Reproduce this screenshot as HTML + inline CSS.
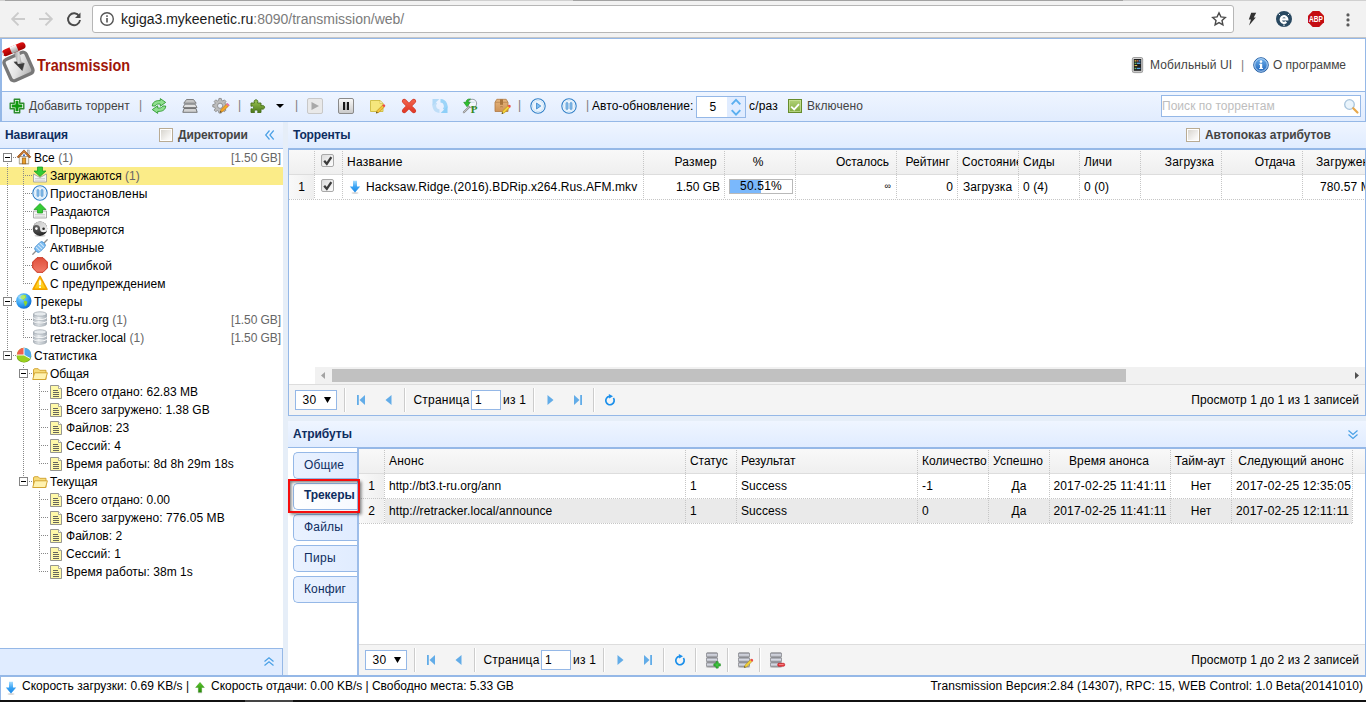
<!DOCTYPE html>
<html lang="ru">
<head>
<meta charset="utf-8">
<title>Transmission WEB Control</title>
<style>
*{box-sizing:border-box}
html,body{margin:0;padding:0}
body{width:1366px;height:702px;overflow:hidden;position:relative;background:#fff;font:12px "Liberation Sans",sans-serif;color:#000}
.abs,.t,.ic,.ln{position:absolute}
.t{white-space:nowrap;line-height:14px;height:14px}
.b{font-weight:bold}
.g{color:#444}
.gr{color:#666}
.nv{color:#0e2d5f}
svg{display:block;overflow:visible}
.ic{width:16px;height:16px}
/* browser chrome */
#chrome{left:0;top:0;width:1366px;height:38px;background:#f2f2f2;border-top:1px solid #d0d0d0;border-bottom:1px solid #c6c6c6}
#url{left:92px;top:5px;width:1142px;height:28px;background:#fff;border:1px solid #b6b6b6;border-radius:3px}
#urltext{left:121px;top:10px;font-size:14px;line-height:18px;height:18px;color:#1a1a1a}
#urltext span{color:#7b7b7b}
/* header */
#head{left:0;top:38px;width:1366px;height:54px;background:#fff;border:1px solid #95b8e7;border-left-width:2px;border-bottom:0}
#logo{left:37px;top:55px;font-weight:bold;font-size:17px;line-height:22px;height:22px;color:#a01508;transform:scaleX(.85);transform-origin:0 0}
#tb{left:0;top:91px;width:1366px;height:31px;background:linear-gradient(#eff5ff,#e1ecfe);border:1px solid #95b8e7;border-left-width:2px}
.sep{position:absolute;width:1px;height:11px;background:#8a8a8a;top:101px}
#spin{left:696px;top:96px;width:50px;height:22px;border:1px solid #95b8e7;background:#fff}
#spinr{left:727px;top:97px;width:18px;height:20px;background:#e0ecff}
#search{left:1161px;top:95px;width:200px;height:22px;border:1px solid #95b8e7;background:#fff}
/* panels */
.ph{position:absolute;height:27px;background:linear-gradient(#eff5ff,#e0ecff);border-bottom:1px solid #95b8e7}
.split{position:absolute;background:#e6eef8}
.bl{position:absolute;background:#95b8e7}
/* tree */
.row{position:absolute;left:0;width:283px;height:18px}
.sel{background:#fbec88}
.vl{position:absolute;width:1px;background-image:linear-gradient(#888 50%,transparent 50%);background-size:1px 2px}
.hl{position:absolute;height:1px;background-image:linear-gradient(90deg,#888 50%,transparent 50%);background-size:2px 1px}
.box{position:absolute;width:9px;height:9px;border:1px solid #848484;background:#fff}
.box:after{content:"";position:absolute;left:1px;top:3px;width:5px;height:1px;background:#000}
/* grids */
.gh{position:absolute;height:26px;background:linear-gradient(#f9f9f9,#efefef);border-bottom:1px solid #ddd}
.vd{position:absolute;width:1px;background-image:linear-gradient(#c6c6c6 50%,transparent 50%);background-size:1px 2px}
.hd{position:absolute;height:1px;background-image:linear-gradient(90deg,#c6c6c6 50%,transparent 50%);background-size:2px 1px}
.pg{position:absolute;height:31px;background:#f4f4f4;border-top:1px solid #ddd}
.psep{position:absolute;width:2px;height:24px;border-left:1px solid #ccc;border-right:1px solid #fff}
.psel{position:absolute;width:42px;height:20px;border:1px solid #95b8e7;background:#fff}
.pin{position:absolute;width:30px;height:20px;border:1px solid #95b8e7;background:#fff}
.cb{position:absolute;width:13px;height:13px;border:1px solid #a9a9a9;border-radius:2px;background:linear-gradient(135deg,#dcdcdc,#fdfdfd)}
.cbo{position:absolute;width:14px;height:14px;border:1px solid #b9ab93;box-shadow:inset 0 0 0 1px #fff;background:linear-gradient(135deg,#d4d1ca,#f6f5f3 70%,#fff)}
.tab{position:absolute;left:293px;width:64px;height:27px;border:1px solid #95b8e7;border-right:0;border-radius:5px 0 0 5px;background:linear-gradient(90deg,#eaf2ff,#e0ecff)}
#bottomdark{left:0;top:700px;width:1366px;height:2px;background:#111}
</style>
</head>
<body>
<div id="chrome" class="abs"></div>
<div id="url" class="abs"></div>
<div class="abs" style="left:5px;top:0;width:445px;height:1px;background:#a2a2a2"></div>
<div class="abs" style="left:573px;top:0;width:550px;height:1px;background:#a2a2a2"></div>
<div class="ic" style="left:10px;top:11px;width:16px;height:16px"><svg viewBox="0 0 16 16" width="100%" height="100%"><path d="M15 8H3M8.500 1.700 2.200 8l6.300 6.300" fill="none" stroke="#cbcbcb" stroke-width="1.900"/></svg></div>
<div class="ic" style="left:38px;top:11px;width:16px;height:16px"><svg viewBox="0 0 16 16" width="100%" height="100%"><path d="M1 8h12M7.500 1.700 13.800 8l-6.300 6.300" fill="none" stroke="#cbcbcb" stroke-width="1.900"/></svg></div>
<div class="ic" style="left:65px;top:10px;width:18px;height:18px"><svg viewBox="0 0 18 18" width="100%" height="100%"><path d="M14.2 6.200A6 6 0 1 0 15 10" fill="none" stroke="#4a4a4a" stroke-width="1.9"/><path d="M15.500 2.500v5.500h-5.500z" fill="#4a4a4a"/></svg></div>
<div class="ic" style="left:99px;top:11px;width:16px;height:16px"><svg viewBox="0 0 16 16" width="100%" height="100%"><circle cx="8" cy="8" r="6.300" fill="none" stroke="#555" stroke-width="1.400"/><rect x="7.200" y="7" width="1.600" height="4.500" fill="#555"/><rect x="7.200" y="4.300" width="1.600" height="1.600" fill="#555"/></svg></div>
<div id="urltext" class="t">kgiga3.mykeenetic.ru<span>:8090/transmission/web/</span></div>
<div class="ic" style="left:1211px;top:11px;width:16px;height:16px"><svg viewBox="0 0 16 16" width="100%" height="100%"><path d="M8 1.800l1.900 4.100 4.400.500-3.300 3 .900 4.400L8 11.600l-3.900 2.200.900-4.400-3.300-3 4.400-.500z" fill="none" stroke="#4a4a4a" stroke-width="1.400" stroke-linejoin="miter"/></svg></div>
<div class="ic" style="left:1248px;top:12px;width:9px;height:14px"><svg viewBox="0 0 9 14" width="100%" height="100%"><path d="M3.200 .8H8.200L5.700 5.400H7.800L1 13.400 3 7.600H.8z" fill="#333"/></svg></div>
<div class="ic" style="left:1276px;top:11px;width:16px;height:16px"><svg viewBox="0 0 16 16" width="100%" height="100%"><circle cx="8" cy="8" r="8" fill="#284860"/><path d="M4.700 8.400H11.300A3.300 3.300 0 1 0 10.300 10.900" fill="none" stroke="#fff" stroke-width="2.200"/><path d="M2.600 2.600l1.500 1.500M13.400 2.600l-1.500 1.500M8 13.300v1.900" stroke="#fff" stroke-width="1"/></svg></div>
<div class="ic" style="left:1308px;top:11px;width:16px;height:16px"><svg viewBox="0 0 18 18" width="100%" height="100%"><path d="M5.300 0h7.400L18 5.300v7.400L12.700 18H5.300L0 12.700V5.300z" fill="#c40d12"/><text x="1.200" y="12.400" font-family="Liberation Sans,sans-serif" font-weight="bold" font-size="9.400" fill="#fff" textLength="15.600" lengthAdjust="spacingAndGlyphs">ABP</text></svg></div>
<div class="ic" style="left:1346px;top:13px;width:4px;height:14px"><svg viewBox="0 0 4 14" width="100%" height="100%"><circle cx="2" cy="1.900" r="1.600" fill="#5a5a5a"/><circle cx="2" cy="6.900" r="1.600" fill="#5a5a5a"/><circle cx="2" cy="11.900" r="1.600" fill="#5a5a5a"/></svg></div>
<div id="head" class="abs"></div>
<div class="ic" style="left:0px;top:40px;width:40px;height:46px"><svg viewBox="0 0 40 46" width="100%" height="100%"><defs><linearGradient id="lgF" x1="0" y1="0" x2="1" y2="1"><stop offset="0" stop-color="#ffffff"/><stop offset=".5" stop-color="#e4e4e4"/><stop offset="1" stop-color="#a8a8a8"/></linearGradient>
<linearGradient id="lgS" x1="0" y1="0" x2="1" y2="0"><stop offset="0" stop-color="#8a8a8a"/><stop offset=".5" stop-color="#d8d8d8"/><stop offset="1" stop-color="#6a6a6a"/></linearGradient>
<linearGradient id="lgR" x1="0" y1="0" x2="0" y2="1"><stop offset="0" stop-color="#e01010"/><stop offset="1" stop-color="#a00000"/></linearGradient>
<linearGradient id="lgM" x1="0" y1="0" x2="0" y2="1"><stop offset="0" stop-color="#ffffff"/><stop offset="1" stop-color="#9a9a9a"/></linearGradient></defs>
<g transform="rotate(-24 18.500 26.500)"><rect x="6.500" y="15" width="24" height="23" rx="3.500" fill="url(#lgF)" stroke="#787878" stroke-width="3.400"/></g>
<path d="M13 9.500 18.500 7.500l3 14.500 3.200 1.200-2 7.800-9-8.400 3.300-.3z" fill="url(#lgS)"/>
<path d="M13.600 21.800l3.400-.3.800 2.500 6.400-.8-2 7.600z" fill="#3c3c3c"/>
<g transform="rotate(-23 13.700 9.300)"><rect x="1.700" y="5.800" width="24.500" height="7" rx="3.500" fill="url(#lgR)"/><rect x="10.500" y="5.800" width="7" height="7" fill="url(#lgM)"/><rect x="1" y="7.800" width="1.800" height="3" rx=".7" fill="#ddd"/></g></svg></div>
<div id="logo" class="t">Transmission</div>
<div class="ic" style="left:1131px;top:57px;width:13px;height:16px"><svg viewBox="0 0 13 16" width="100%" height="100%"><ellipse cx="6.500" cy="15.600" rx="6" ry=".6" fill="#000" opacity=".2"/><rect x="1.300" y=".5" width="10.400" height="14.800" rx="1.500" fill="#d4d4d4" stroke="#8c8c8c" stroke-width=".8"/><rect x="2.800" y="2" width="7.400" height="11.800" fill="#1e1e1e"/><rect x="3.600" y="3.200" width="1.800" height="1.300" fill="#e8c44a"/><rect x="5.900" y="3.200" width="1.500" height="1.300" fill="#e66a4a"/><rect x="7.800" y="3.200" width="1.600" height="1.300" fill="#5aa6e6"/><rect x="3.600" y="5.600" width="1.800" height="1.300" fill="#6ac46a"/><rect x="5.900" y="5.600" width="3.500" height="1.300" fill="#5aa6e6"/><rect x="3.600" y="8" width="2.600" height="1.100" fill="#e8c44a"/><rect x="3.600" y="10.800" width="1.800" height="1.300" fill="#6ac46a"/><rect x="5.900" y="10.800" width="3.500" height="1.300" fill="#5aa6e6"/></svg></div>
<div class="t g" style="left:1150px;top:58px;letter-spacing:0.101px;">Мобильный UI</div>
<div class="t " style="left:1241px;top:58px;color:#7c7c7c;">|</div>
<div class="ic" style="left:1253px;top:57px;width:16px;height:16px"><svg viewBox="0 0 16 16" width="100%" height="100%"><defs><linearGradient id="ig" x1="0" y1="0" x2="0" y2="1"><stop offset="0" stop-color="#6fb2ee"/><stop offset="1" stop-color="#1d62b8"/></linearGradient></defs><circle cx="8" cy="8" r="7.300" fill="url(#ig)" stroke="#2a64a8" stroke-width="1"/><circle cx="8" cy="8" r="6.300" fill="none" stroke="#cfe4fa" stroke-width=".8"/><rect x="7" y="6.800" width="2.200" height="5" fill="#fff"/><rect x="6.200" y="6.800" width="2" height="1" fill="#fff"/><rect x="6.200" y="11" width="3.800" height="1" fill="#fff"/><circle cx="8" cy="4.600" r="1.300" fill="#fff"/></svg></div>
<div class="t g" style="left:1273px;top:58px;letter-spacing:-0.037px;">О программе</div>
<div id="tb" class="abs"></div>
<div class="ic" style="left:9px;top:98px;width:16px;height:16px"><svg viewBox="0 0 16 16" width="100%" height="100%"><path d="M5.300 1.200h5.400v4.100h4.100v5.400h-4.100v4.100H5.300v-4.100H1.200V5.300h4.100z" fill="#fff" stroke="#2e8c2e" stroke-width="1.400" stroke-linejoin="round"/><path d="M6.500 2.700h3v3.800h3.800v3H9.500v3.800h-3V9.500H2.700v-3h3.800z" fill="#0f9a0f"/></svg></div>
<div class="t g" style="left:29px;top:99px;letter-spacing:0.011px;">Добавить торрент</div>
<div class="t " style="left:139px;top:98px;color:#7c7c7c;">|</div>
<div class="t " style="left:238px;top:98px;color:#7c7c7c;">|</div>
<div class="t " style="left:295px;top:98px;color:#7c7c7c;">|</div>
<div class="t " style="left:518px;top:98px;color:#7c7c7c;">|</div>
<div class="t " style="left:586px;top:98px;color:#7c7c7c;">|</div>
<div class="ic" style="left:151px;top:98px;width:16px;height:16px"><svg viewBox="0 0 16 16" width="100%" height="100%"><path d="M1.300 8C1.300 4.600 4.300 2.600 7.800 2.600H9.300V.6L14.700 4.400 9.300 8.200V6H7.800C6 6 4.800 6.600 4.300 8z" fill="#8fe08f" stroke="#2f9a2f" stroke-width=".9" stroke-linejoin="round"/><path d="M1.300 8C1.300 4.600 4.300 2.600 7.800 2.600H9.300V.6L14.700 4.400 9.300 8.200V6H7.800C6 6 4.800 6.600 4.300 8z" fill="#8fe08f" stroke="#2f9a2f" stroke-width=".9" stroke-linejoin="round" transform="rotate(180 8 8)"/></svg></div>
<div class="ic" style="left:182px;top:98px;width:16px;height:16px"><svg viewBox="0 0 16 16" width="100%" height="100%"><path d="M4.500 1.500h7l2.700 3.700H1.800z" fill="#c4c4c4" stroke="#757575" stroke-width=".9" stroke-linejoin="round"/><path d="M2.800 6.200h10.400l1.800 3.300H1z" fill="#e0e0e0" stroke="#757575" stroke-width=".9" stroke-linejoin="round"/><path d="M2 10.500h12l1.200 3.800H.8z" fill="#d2d2d2" stroke="#6a6a6a" stroke-width=".9" stroke-linejoin="round"/></svg></div>
<div class="ic" style="left:213px;top:98px;width:16px;height:16px"><svg viewBox="0 0 16 16" width="100%" height="100%"><path d="M6.800 1h2.400l.4 2 1.300.6 1.700-1.100 1.600 1.600-1.100 1.700.6 1.300 2 .4v2.400l-2 .4-.6 1.300 1.100 1.700-1.600 1.600-1.700-1.100-1.300.6-.4 2H6.800l-.4-2-1.300-.6-1.700 1.100-1.600-1.600 1.100-1.700-.6-1.300-2-.4V7.500l2-.4.6-1.300-1.100-1.700 1.600-1.600 1.700 1.100 1.300-.6z" fill="#bcbcbc" stroke="#808080" stroke-width=".8" transform="translate(-.5,-.5) scale(.95)"/><circle cx="7.100" cy="7.800" r="2.600" fill="#e8eef8" stroke="#808080" stroke-width=".8"/><path d="M7 14.500l1-3 6-6 2 2-6 6z" fill="#f4a626" stroke="#a66a10" stroke-width=".5"/><path d="M13.200 6.300l1.300-1.300 2 2-1.300 1.300z" fill="#e66bb0"/><path d="M7 14.500l.5-1.500 1 1z" fill="#333"/></svg></div>
<div class="ic" style="left:250px;top:98px;width:16px;height:16px"><svg viewBox="0 0 16 16" width="100%" height="100%"><defs><linearGradient id="pz" x1="0" y1="0" x2="0" y2="1"><stop offset="0" stop-color="#9cc552"/><stop offset="1" stop-color="#4c7a1a"/></linearGradient></defs><path d="M1 5h3.500c-.9-1.800-.1-3.200 1.500-3.200S8.400 3.200 7.500 5H11v2.800c1.800-.9 3.600-.1 3.600 1.500S12.800 11.700 11 10.800v3.700H7.600c.6-1.600 0-2.500-1.500-2.500s-2.100.9-1.500 2.500H1v-3.800c1.500.7 2.600.1 2.600-1.200S2.500 7.600 1 8.300z" fill="url(#pz)" stroke="#466e18" stroke-width=".9" stroke-linejoin="round"/></svg></div>
<div class="ic" style="left:276px;top:104px;width:8px;height:4px"><svg viewBox="0 0 8 4" width="100%" height="100%"><path d="M0 0h8L4 4z" fill="#000"/></svg></div>
<div class="ic" style="left:307px;top:98px;width:16px;height:16px"><svg viewBox="0 0 16 16" width="100%" height="100%"><rect x=".5" y=".5" width="15" height="15" rx="1.500" fill="#e9e9e9" stroke="#c8c8c8"/><path d="M4.500 4l7.500 4-7.500 4z" fill="#a9a9a9"/></svg></div>
<div class="ic" style="left:338px;top:98px;width:16px;height:16px"><svg viewBox="0 0 16 16" width="100%" height="100%"><defs><linearGradient id="pb" x1="0" y1="0" x2="0" y2="1"><stop offset="0" stop-color="#fafafa"/><stop offset="1" stop-color="#c9c9c9"/></linearGradient></defs><rect x=".5" y=".5" width="15" height="15" rx="1.500" fill="url(#pb)" stroke="#8a8a8a"/><rect x="5" y="4" width="2.200" height="8" fill="#1a1a1a"/><rect x="8.800" y="4" width="2.200" height="8" fill="#1a1a1a"/></svg></div>
<div class="ic" style="left:369px;top:98px;width:16px;height:16px"><svg viewBox="0 0 16 16" width="100%" height="100%"><path d="M1.500 2.500h9.500l3 3v8h-12.500z" fill="#f5e67c" stroke="#cdbb3e" stroke-width=".9"/><path d="M11 2.500v3h3z" fill="#fffbd8" stroke="#cdbb3e" stroke-width=".6"/><path d="M7.300 15.200l.8-2.600 5.700-5.700 1.800 1.800-5.700 5.700z" fill="#f4c43a" stroke="#a87a10" stroke-width=".5"/><path d="M13.200 7.500l1-1a.9.900 0 0 1 1.300 0l.5.500a.9.900 0 0 1 0 1.300l-1 1z" fill="#ee4a4a"/><path d="M7.300 15.200l.4-1.400 1 1z" fill="#111"/></svg></div>
<div class="ic" style="left:401px;top:98px;width:16px;height:16px"><svg viewBox="0 0 16 16" width="100%" height="100%"><defs><linearGradient id="rx" x1="0" y1="0" x2="0" y2="1"><stop offset="0" stop-color="#f0604a"/><stop offset="1" stop-color="#e23c2a"/></linearGradient></defs><path d="M3.200 3.200 12.800 12.800M12.800 3.200 3.200 12.800" fill="none" stroke="#cf3a28" stroke-width="4.600" stroke-linecap="round"/><path d="M3.200 3.200 12.800 12.800M12.800 3.200 3.200 12.800" fill="none" stroke="url(#rx)" stroke-width="3.400" stroke-linecap="round"/></svg></div>
<div class="ic" style="left:432px;top:98px;width:16px;height:16px"><svg viewBox="0 0 16 16" width="100%" height="100%"><g opacity=".85"><path d="M7.500 13.200A5.300 5.300 0 0 1 3.800 4.200" fill="none" stroke="#b9dcf7" stroke-width="3.600"/><path d="M.5 1h6.800L.5 7.800z" fill="#a9d6f7"/><path d="M8.500 2.800A5.300 5.300 0 0 1 12.200 11.800" fill="none" stroke="#8fd0f8" stroke-width="3.600"/><path d="M15.500 15h-6.800l6.800-6.800z" fill="#7fcaf8"/></g></svg></div>
<div class="ic" style="left:462px;top:98px;width:16px;height:16px"><svg viewBox="0 0 16 16" width="100%" height="100%"><circle cx="10.300" cy="5.600" r="4.300" fill="#f3f7fb" stroke="#9aa3ab" stroke-width="1.100"/><path d="M7.600 4.200h5" stroke="#c9d6e4" stroke-width="1"/><path d="M7.200 9 1.800 14.300" stroke="#8a8a8a" stroke-width="2" stroke-linecap="round"/><path d="M7.200 9 1.800 14.300" stroke="#e4e4e4" stroke-width=".7" stroke-linecap="round"/><path d="M8.500 1C5.500 .6 4 2.300 4 4.300H1.700L5 8.800 8.300 4.300H6C6 3 6.800 1.700 8.500 1z" fill="#2fc02f" stroke="#1a8a1a" stroke-width=".6" stroke-linejoin="round"/><text x="8.700" y="15.200" font-family="Liberation Serif,serif" font-weight="bold" font-size="11" fill="#2f8a1a">P</text></svg></div>
<div class="ic" style="left:494px;top:98px;width:16px;height:16px"><svg viewBox="0 0 16 16" width="100%" height="100%"><defs><linearGradient id="bx" x1="0" y1="0" x2="0" y2="1"><stop offset="0" stop-color="#e6b67e"/><stop offset="1" stop-color="#cf9458"/></linearGradient></defs><path d="M1 4.300 2.800 1.300h9.400l1.800 3v9.200H1z" fill="url(#bx)" stroke="#b07a42" stroke-width=".8"/><path d="M1 4.300h13" stroke="#b98650" stroke-width=".8"/><path d="M6 1.300h3v5.500H6z" fill="#a8733c"/><path d="M6.300 8h2.400v1.800l-1.200-.8-1.200.8z" fill="#b98650"/><path d="M7.800 15.700l.8-2.600 5.700-5.700 1.800 1.800-5.700 5.700z" fill="#f4d23a" stroke="#a88410" stroke-width=".5"/><path d="M13.700 8l1-1a.9.900 0 0 1 1.300 0l.5.500a.9.900 0 0 1 0 1.300l-1 1z" fill="#ee4a4a"/><path d="M7.800 15.700l.4-1.400 1 1z" fill="#111"/></svg></div>
<div class="ic" style="left:530px;top:98px;width:16px;height:16px"><svg viewBox="0 0 16 16" width="100%" height="100%"><circle cx="8" cy="8" r="7.200" fill="#fff" stroke="#2f7fc8" stroke-width="1.100"/><circle cx="8" cy="8" r="5.600" fill="#eaf4fd" stroke="#bcdaf4" stroke-width=".8"/><path d="M6.500 5 10.800 8l-4.300 3z" fill="#7cbcf0" stroke="#3a86cc" stroke-width=".8" stroke-linejoin="round"/></svg></div>
<div class="ic" style="left:561px;top:98px;width:16px;height:16px"><svg viewBox="0 0 16 16" width="100%" height="100%"><circle cx="8" cy="8" r="7.200" fill="#fff" stroke="#2f7fc8" stroke-width="1.100"/><circle cx="8" cy="8" r="5.500" fill="#eef6fd" stroke="#c4dff6" stroke-width=".8"/><rect x="5.100" y="4.600" width="1.800" height="6.800" rx=".9" fill="#b4dcfa" stroke="#2f7fc8" stroke-width=".8"/><rect x="9.100" y="4.600" width="1.800" height="6.800" rx=".9" fill="#b4dcfa" stroke="#2f7fc8" stroke-width=".8"/></svg></div>
<div class="t " style="left:592px;top:99px;letter-spacing:0.076px;">Авто-обновление:</div>
<div id="spin" class="abs"></div><div id="spinr" class="abs"></div>
<div class="t " style="left:709.5px;top:100px;">5</div>
<div class="ic" style="left:731px;top:97px;width:10px;height:20px"><svg viewBox="0 0 10 20" width="100%" height="100%"><path d="M.7 7.300 5 2.800l4.300 4.500" fill="none" stroke="#5aaff0" stroke-width="1.900"/><path d="M.7 13.200 5 17.700l4.300-4.500" fill="none" stroke="#5aaff0" stroke-width="1.900"/></svg></div>
<div class="t " style="left:749px;top:99px;letter-spacing:0.163px;">с/раз</div>
<div class="ic" style="left:788px;top:99px;width:14px;height:14px"><svg viewBox="0 0 14 14" width="100%" height="100%"><defs><linearGradient id="cg" x1="0" y1="0" x2="0" y2="1"><stop offset="0" stop-color="#b4d47a"/><stop offset="1" stop-color="#7ea83c"/></linearGradient></defs><rect x=".5" y=".5" width="13" height="13" fill="url(#cg)" stroke="#668c2c"/><rect x="1.500" y="1.500" width="11" height="11" fill="none" stroke="#cfe6a0" stroke-width=".8" opacity=".8"/><path d="M3.200 7.600l3 2.800L11 5.200" fill="none" stroke="#fff" stroke-width="1.800"/></svg></div>
<div class="t g" style="left:807px;top:99px;letter-spacing:0.065px;">Включено</div>
<div id="search" class="abs"></div>
<div class="t " style="left:1162px;top:99px;color:#bdbdbd;letter-spacing:0.037px;">Поиск по торрентам</div>
<div class="ic" style="left:1343px;top:98px;width:16px;height:16px"><svg viewBox="0 0 16 16" width="100%" height="100%"><circle cx="6.500" cy="6.500" r="4.800" fill="#eaf4fb" stroke="#a8c4dc" stroke-width="1.300"/><path d="M10.200 10.200 14.500 14.500" stroke="#e8a84a" stroke-width="2.200" stroke-linecap="round"/></svg></div>
<div class="ph" style="left:0;top:122px;width:283px"></div>
<div class="t b nv" style="left:5px;top:128px;letter-spacing:-0.058px;">Навигация</div>
<div class="cbo" style="left:159px;top:128px"></div>
<div class="t b g" style="left:178px;top:128px;letter-spacing:-0.123px;">Директории</div>
<div class="ic" style="left:265px;top:130px;width:9px;height:10px"><svg viewBox="0 0 9 10" width="100%" height="100%"><path d="M4.500 .5 .7 5l3.800 4.500M8.700 .5 4.900 5l3.800 4.500" fill="none" stroke="#4aa0e6" stroke-width="1.200"/></svg></div>
<div class="split" style="left:283px;top:122px;width:5px;height:554px"></div>
<div class="row sel" style="top:167px"></div>
<div class="vl" style="left:7px;top:163px;height:188px"></div>
<div class="vl" style="left:23px;top:167px;height:117px"></div>
<div class="vl" style="left:23px;top:311px;height:27px"></div>
<div class="vl" style="left:23px;top:365px;height:112px"></div>
<div class="vl" style="left:39px;top:383px;height:81px"></div>
<div class="vl" style="left:39px;top:491px;height:81px"></div>
<div class="hl" style="left:11px;top:157px;width:5px"></div>
<div class="box" style="left:3px;top:153px"></div>
<div class="ic" style="left:16px;top:149px;width:16px;height:16px"><svg viewBox="0 0 16 16" width="100%" height="100%"><defs><linearGradient id="hr" x1="0" y1="0" x2="0" y2="1"><stop offset="0" stop-color="#d8893e"/><stop offset="1" stop-color="#b8641e"/></linearGradient></defs><rect x="11.300" y="1" width="1.900" height="4.500" fill="#d0d0d0" stroke="#8a8a8a" stroke-width=".5"/><path d="M3.300 7.500h9.400v7.300H3.300z" fill="#f6f2e8" stroke="#9a917e" stroke-width=".8"/><path d="M3 14.300h10v.9H3z" fill="#aaa08c"/><path d="M8 .9 1.200 7.800l1.200 1.200L8 3.300l5.600 5.700 1.200-1.200z" fill="url(#hr)" stroke="#8a4810" stroke-width=".7" stroke-linejoin="round"/><rect x="6.300" y="9" width="3.400" height="5.800" fill="#e8a02a" stroke="#a0620e" stroke-width=".7"/><circle cx="8" cy="6.200" r="1" fill="#2a62c8"/></svg></div>
<div class="t " style="left:34px;top:151px;letter-spacing:0.046px;">Все <span class="gr">(1)</span></div>
<div class="t gr" style="right:1085px;top:151px;letter-spacing:-0.077px;">[1.50 GB]</div>
<div class="hl" style="left:23px;top:175px;width:9px"></div>
<div class="ic" style="left:32px;top:167px;width:16px;height:16px"><svg viewBox="0 0 16 16" width="100%" height="100%"><path d="M1.500 7 8 10.500 14.500 7v8h-13z" fill="#f4f4f4" stroke="#9a9a9a" stroke-width=".8"/><path d="M3 11.500h10M3 13.200h10" stroke="#c9c9c9" stroke-width=".8"/><path d="M5.500 0h5v4H14L8 9.500 2 4h3.500z" fill="#34cc34" stroke="#1a961a" stroke-width=".7"/></svg></div>
<div class="t " style="left:50px;top:169px;letter-spacing:-0.045px;">Загружаются <span class="gr">(1)</span></div>
<div class="hl" style="left:23px;top:193px;width:9px"></div>
<div class="ic" style="left:32px;top:185px;width:16px;height:16px"><svg viewBox="0 0 16 16" width="100%" height="100%"><circle cx="8" cy="8" r="7.200" fill="#fff" stroke="#2f7fc8" stroke-width="1.100"/><circle cx="8" cy="8" r="5.500" fill="#eef6fd" stroke="#c4dff6" stroke-width=".8"/><rect x="5.100" y="4.600" width="1.800" height="6.800" rx=".9" fill="#b4dcfa" stroke="#2f7fc8" stroke-width=".8"/><rect x="9.100" y="4.600" width="1.800" height="6.800" rx=".9" fill="#b4dcfa" stroke="#2f7fc8" stroke-width=".8"/></svg></div>
<div class="t " style="left:50px;top:187px;letter-spacing:0.182px;">Приостановлены</div>
<div class="hl" style="left:23px;top:211px;width:9px"></div>
<div class="ic" style="left:32px;top:203px;width:16px;height:16px"><svg viewBox="0 0 16 16" width="100%" height="100%"><path d="M1.500 8h13v7h-13z" fill="#f4f4f4" stroke="#9a9a9a" stroke-width=".8"/><path d="M3 11.500h10M3 13.200h10" stroke="#c9c9c9" stroke-width=".8"/><path d="M8 .5 14 6.500h-3.500V10h-5V6.500H2z" fill="#34cc34" stroke="#1a961a" stroke-width=".7"/></svg></div>
<div class="t " style="left:50px;top:205px;letter-spacing:0.017px;">Раздаются</div>
<div class="hl" style="left:23px;top:229px;width:9px"></div>
<div class="ic" style="left:32px;top:221px;width:16px;height:16px"><svg viewBox="0 0 16 16" width="100%" height="100%"><defs><radialGradient id="yg" cx=".3" cy=".3" r=".9"><stop offset="0" stop-color="#6a6a6a"/><stop offset="1" stop-color="#161616"/></radialGradient><linearGradient id="yl" x1="0" y1="0" x2="1" y2="1"><stop offset="0" stop-color="#bdbdbd"/><stop offset="1" stop-color="#f4f4f4"/></linearGradient></defs><ellipse cx="8" cy="14.800" rx="5.500" ry="1" fill="#000" opacity=".18"/><circle cx="8" cy="7.700" r="7.200" fill="url(#yg)"/><path d="M.8 7.700A7.200 7.200 0 0 1 15.200 7.700A3.600 3.600 0 0 1 8 7.700A3.600 3.600 0 0 0 .8 7.700z" fill="url(#yl)"/><circle cx="4.400" cy="7.600" r="1.300" fill="#fff"/><circle cx="11.600" cy="7.800" r="1.300" fill="#2a2a2a"/></svg></div>
<div class="t " style="left:50px;top:223px;letter-spacing:-0.017px;">Проверяются</div>
<div class="hl" style="left:23px;top:247px;width:9px"></div>
<div class="ic" style="left:32px;top:239px;width:16px;height:16px"><svg viewBox="0 0 16 16" width="100%" height="100%"><path d="M.8 15.200 3.500 12.500M12.500 3.500 15.200 .8" stroke="#8e8e8e" stroke-width="1.300" stroke-linecap="round"/><g transform="rotate(-45 8 8)"><rect x="2.300" y="4.700" width="11.400" height="6.600" rx="2.600" fill="#7cbcf0" stroke="#3a86cc" stroke-width=".8"/><path d="M5.200 4.900v6.200M8 4.900v6.200M10.800 4.900v6.200" stroke="#cfe6fa" stroke-width="1.100"/></g></svg></div>
<div class="t " style="left:50px;top:241px;letter-spacing:0.031px;">Активные</div>
<div class="hl" style="left:23px;top:265px;width:9px"></div>
<div class="ic" style="left:32px;top:257px;width:16px;height:16px"><svg viewBox="0 0 16 16" width="100%" height="100%"><defs><linearGradient id="sg" x1="0" y1="0" x2="0" y2="1"><stop offset="0" stop-color="#e0503c"/><stop offset="1" stop-color="#f07a68"/></linearGradient></defs><path d="M5 .7h6L15.300 5v6L11 15.300H5L.7 11V5z" fill="url(#sg)" stroke="#c8301c" stroke-width="1"/></svg></div>
<div class="t " style="left:50px;top:259px;letter-spacing:0.166px;">С ошибкой</div>
<div class="hl" style="left:23px;top:283px;width:9px"></div>
<div class="ic" style="left:32px;top:275px;width:16px;height:16px"><svg viewBox="0 0 16 16" width="100%" height="100%"><defs><linearGradient id="wg" x1="0" y1="0" x2="0" y2="1"><stop offset="0" stop-color="#ffe96a"/><stop offset="1" stop-color="#ffc400"/></linearGradient></defs><path d="M8 1.500 15 14.300H1z" fill="url(#wg)" stroke="#f2a200" stroke-width="1.600" stroke-linejoin="round"/><rect x="7.100" y="5.300" width="1.800" height="5" rx=".4" fill="#fff"/><rect x="7.100" y="11.300" width="1.800" height="1.800" rx=".4" fill="#fff"/></svg></div>
<div class="t " style="left:50px;top:277px;letter-spacing:0.079px;">С предупреждением</div>
<div class="hl" style="left:11px;top:301px;width:5px"></div>
<div class="box" style="left:3px;top:297px"></div>
<div class="ic" style="left:16px;top:293px;width:16px;height:16px"><svg viewBox="0 0 16 16" width="100%" height="100%"><defs><radialGradient id="gg" cx=".35" cy=".3" r=".8"><stop offset="0" stop-color="#8ad8ff"/><stop offset=".6" stop-color="#2a9af0"/><stop offset="1" stop-color="#0a5fc4"/></radialGradient></defs><circle cx="7.800" cy="8" r="7.700" fill="url(#gg)"/><path d="M5.500 2.500c1.500-1 3.500-1 4.800-.3l-.8 1.300 1.200.8-1.500 1.200-1 .2.300 1.300-1.300.3-.8-1.200-1.500-.5-.6-1.500z" fill="#9be03a"/><path d="M8.300 7.800c1.200-.5 2.600.2 3 1.200.2 1.300-.8 2.300-1.300 3.500l-1.200.8-.3-2.300-.9-1.300z" fill="#8cd62e"/><ellipse cx="5.500" cy="4" rx="3.500" ry="2" fill="#fff" opacity=".25"/></svg></div>
<div class="t " style="left:34px;top:295px;letter-spacing:0.157px;">Трекеры</div>
<div class="hl" style="left:23px;top:319px;width:9px"></div>
<div class="ic" style="left:32px;top:311px;width:16px;height:16px"><svg viewBox="0 0 16 16" width="100%" height="100%"><defs><linearGradient id="dg" x1="0" y1="0" x2="1" y2="0"><stop offset="0" stop-color="#b4bbc2"/><stop offset=".4" stop-color="#eef1f3"/><stop offset="1" stop-color="#a8b0b8"/></linearGradient></defs><path d="M1.500 3v10c0 1.300 3 2.200 6.500 2.200s6.500-.9 6.500-2.200V3z" fill="url(#dg)" stroke="#9aa2aa" stroke-width=".7"/><ellipse cx="8" cy="3" rx="6.500" ry="2.200" fill="#e6eaed" stroke="#9aa2aa" stroke-width=".7"/><path d="M1.500 6.400c0 1.300 3 2.200 6.500 2.200s6.500-.9 6.500-2.200M1.500 10c0 1.300 3 2.200 6.500 2.200s6.500-.9 6.500-2.200" fill="none" stroke="#f6f7f8" stroke-width="1.100"/><path d="M1.500 7.300c0 1.300 3 2.200 6.500 2.200s6.500-.9 6.500-2.200M1.500 10.900c0 1.300 3 2.200 6.500 2.200s6.500-.9 6.500-2.200" fill="none" stroke="#9aa2aa" stroke-width=".5"/></svg></div>
<div class="t " style="left:50px;top:313px;letter-spacing:0.019px;">bt3.t-ru.org <span class="gr">(1)</span></div>
<div class="t gr" style="right:1085px;top:313px;letter-spacing:-0.077px;">[1.50 GB]</div>
<div class="hl" style="left:23px;top:337px;width:9px"></div>
<div class="ic" style="left:32px;top:329px;width:16px;height:16px"><svg viewBox="0 0 16 16" width="100%" height="100%"><defs><linearGradient id="dg" x1="0" y1="0" x2="1" y2="0"><stop offset="0" stop-color="#b4bbc2"/><stop offset=".4" stop-color="#eef1f3"/><stop offset="1" stop-color="#a8b0b8"/></linearGradient></defs><path d="M1.500 3v10c0 1.300 3 2.200 6.500 2.200s6.500-.9 6.500-2.200V3z" fill="url(#dg)" stroke="#9aa2aa" stroke-width=".7"/><ellipse cx="8" cy="3" rx="6.500" ry="2.200" fill="#e6eaed" stroke="#9aa2aa" stroke-width=".7"/><path d="M1.500 6.400c0 1.300 3 2.200 6.500 2.200s6.500-.9 6.500-2.200M1.500 10c0 1.300 3 2.200 6.500 2.200s6.500-.9 6.500-2.200" fill="none" stroke="#f6f7f8" stroke-width="1.100"/><path d="M1.500 7.300c0 1.300 3 2.200 6.500 2.200s6.500-.9 6.500-2.200M1.500 10.900c0 1.300 3 2.200 6.500 2.200s6.500-.9 6.500-2.200" fill="none" stroke="#9aa2aa" stroke-width=".5"/></svg></div>
<div class="t " style="left:50px;top:331px;letter-spacing:0.086px;">retracker.local <span class="gr">(1)</span></div>
<div class="t gr" style="right:1085px;top:331px;letter-spacing:-0.077px;">[1.50 GB]</div>
<div class="hl" style="left:11px;top:355px;width:5px"></div>
<div class="box" style="left:3px;top:351px"></div>
<div class="ic" style="left:16px;top:347px;width:16px;height:16px"><svg viewBox="0 0 16 16" width="100%" height="100%"><ellipse cx="8" cy="9.500" rx="7.300" ry="6" fill="#6a9a12"/><circle cx="8" cy="8" r="7.200" fill="#9ad01e"/><path d="M8 8V.8A7.200 7.200 0 0 0 .8 8z" fill="#f0604e"/><path d="M8 8V.8a7.200 7.200 0 0 1 6.300 10.700z" fill="#52a8ea"/><path d="M8 .8V8M.8 8H8l6.300 3.500" fill="none" stroke="#fff" stroke-width=".9"/></svg></div>
<div class="t " style="left:34px;top:349px;letter-spacing:-0.016px;">Статистика</div>
<div class="hl" style="left:27px;top:373px;width:5px"></div>
<div class="box" style="left:19px;top:369px"></div>
<div class="ic" style="left:32px;top:365px;width:16px;height:16px"><svg viewBox="0 0 16 16" width="100%" height="100%"><g transform="translate(0,1)"><path d="M1.500 13.500v-9.500c0-.8.500-1.300 1.300-1.300h3.400l1.500 1.600h6.300v9.200z" fill="#f7dc7a" stroke="#cf9f2a" stroke-width=".9"/><path d="M.7 13.500 2.600 6.800h12.800l-1.900 6.700z" fill="#fff2b0" stroke="#cf9f2a" stroke-width=".9" stroke-linejoin="round"/></g></svg></div>
<div class="t " style="left:50px;top:367px;letter-spacing:-0.050px;">Общая</div>
<div class="hl" style="left:39px;top:391px;width:9px"></div>
<div class="ic" style="left:48px;top:383px;width:16px;height:16px"><svg viewBox="0 0 16 16" width="100%" height="100%"><g transform="translate(0,1)"><path d="M2.500 1.500h8l3 3v10h-11z" fill="#fff9a8" stroke="#8a8a8a" stroke-width=".9"/><path d="M10.500 1.500v3h3" fill="#fff" stroke="#8a8a8a" stroke-width=".7"/><path d="M5 6.500h5M5 8.500h6M5 10.500h6M5 12.500h6" stroke="#555" stroke-width=".9"/></g></svg></div>
<div class="t " style="left:66px;top:385px;letter-spacing:0.035px;">Всего отдано: 62.83 MB</div>
<div class="hl" style="left:39px;top:409px;width:9px"></div>
<div class="ic" style="left:48px;top:401px;width:16px;height:16px"><svg viewBox="0 0 16 16" width="100%" height="100%"><g transform="translate(0,1)"><path d="M2.500 1.500h8l3 3v10h-11z" fill="#fff9a8" stroke="#8a8a8a" stroke-width=".9"/><path d="M10.500 1.500v3h3" fill="#fff" stroke="#8a8a8a" stroke-width=".7"/><path d="M5 6.500h5M5 8.500h6M5 10.500h6M5 12.500h6" stroke="#555" stroke-width=".9"/></g></svg></div>
<div class="t " style="left:66px;top:403px;letter-spacing:0.042px;">Всего загружено: 1.38 GB</div>
<div class="hl" style="left:39px;top:427px;width:9px"></div>
<div class="ic" style="left:48px;top:419px;width:16px;height:16px"><svg viewBox="0 0 16 16" width="100%" height="100%"><g transform="translate(0,1)"><path d="M2.500 1.500h8l3 3v10h-11z" fill="#fff9a8" stroke="#8a8a8a" stroke-width=".9"/><path d="M10.500 1.500v3h3" fill="#fff" stroke="#8a8a8a" stroke-width=".7"/><path d="M5 6.500h5M5 8.500h6M5 10.500h6M5 12.500h6" stroke="#555" stroke-width=".9"/></g></svg></div>
<div class="t " style="left:66px;top:421px;letter-spacing:0.043px;">Файлов: 23</div>
<div class="hl" style="left:39px;top:445px;width:9px"></div>
<div class="ic" style="left:48px;top:437px;width:16px;height:16px"><svg viewBox="0 0 16 16" width="100%" height="100%"><g transform="translate(0,1)"><path d="M2.500 1.500h8l3 3v10h-11z" fill="#fff9a8" stroke="#8a8a8a" stroke-width=".9"/><path d="M10.500 1.500v3h3" fill="#fff" stroke="#8a8a8a" stroke-width=".7"/><path d="M5 6.500h5M5 8.500h6M5 10.500h6M5 12.500h6" stroke="#555" stroke-width=".9"/></g></svg></div>
<div class="t " style="left:66px;top:439px;letter-spacing:0.101px;">Сессий: 4</div>
<div class="hl" style="left:39px;top:463px;width:9px"></div>
<div class="ic" style="left:48px;top:455px;width:16px;height:16px"><svg viewBox="0 0 16 16" width="100%" height="100%"><g transform="translate(0,1)"><path d="M2.500 1.500h8l3 3v10h-11z" fill="#fff9a8" stroke="#8a8a8a" stroke-width=".9"/><path d="M10.500 1.500v3h3" fill="#fff" stroke="#8a8a8a" stroke-width=".7"/><path d="M5 6.500h5M5 8.500h6M5 10.500h6M5 12.500h6" stroke="#555" stroke-width=".9"/></g></svg></div>
<div class="t " style="left:66px;top:457px;letter-spacing:0.055px;">Время работы: 8d 8h 29m 18s</div>
<div class="hl" style="left:27px;top:481px;width:5px"></div>
<div class="box" style="left:19px;top:477px"></div>
<div class="ic" style="left:32px;top:473px;width:16px;height:16px"><svg viewBox="0 0 16 16" width="100%" height="100%"><g transform="translate(0,1)"><path d="M1.500 13.500v-9.500c0-.8.500-1.300 1.300-1.300h3.400l1.500 1.600h6.300v9.200z" fill="#f7dc7a" stroke="#cf9f2a" stroke-width=".9"/><path d="M.7 13.500 2.600 6.800h12.800l-1.900 6.700z" fill="#fff2b0" stroke="#cf9f2a" stroke-width=".9" stroke-linejoin="round"/></g></svg></div>
<div class="t " style="left:50px;top:475px;letter-spacing:-0.043px;">Текущая</div>
<div class="hl" style="left:39px;top:499px;width:9px"></div>
<div class="ic" style="left:48px;top:491px;width:16px;height:16px"><svg viewBox="0 0 16 16" width="100%" height="100%"><g transform="translate(0,1)"><path d="M2.500 1.500h8l3 3v10h-11z" fill="#fff9a8" stroke="#8a8a8a" stroke-width=".9"/><path d="M10.500 1.500v3h3" fill="#fff" stroke="#8a8a8a" stroke-width=".7"/><path d="M5 6.500h5M5 8.500h6M5 10.500h6M5 12.500h6" stroke="#555" stroke-width=".9"/></g></svg></div>
<div class="t " style="left:66px;top:493px;letter-spacing:0.043px;">Всего отдано: 0.00</div>
<div class="hl" style="left:39px;top:517px;width:9px"></div>
<div class="ic" style="left:48px;top:509px;width:16px;height:16px"><svg viewBox="0 0 16 16" width="100%" height="100%"><g transform="translate(0,1)"><path d="M2.500 1.500h8l3 3v10h-11z" fill="#fff9a8" stroke="#8a8a8a" stroke-width=".9"/><path d="M10.500 1.500v3h3" fill="#fff" stroke="#8a8a8a" stroke-width=".7"/><path d="M5 6.500h5M5 8.500h6M5 10.500h6M5 12.500h6" stroke="#555" stroke-width=".9"/></g></svg></div>
<div class="t " style="left:66px;top:511px;letter-spacing:0.077px;">Всего загружено: 776.05 MB</div>
<div class="hl" style="left:39px;top:535px;width:9px"></div>
<div class="ic" style="left:48px;top:527px;width:16px;height:16px"><svg viewBox="0 0 16 16" width="100%" height="100%"><g transform="translate(0,1)"><path d="M2.500 1.500h8l3 3v10h-11z" fill="#fff9a8" stroke="#8a8a8a" stroke-width=".9"/><path d="M10.500 1.500v3h3" fill="#fff" stroke="#8a8a8a" stroke-width=".7"/><path d="M5 6.500h5M5 8.500h6M5 10.500h6M5 12.500h6" stroke="#555" stroke-width=".9"/></g></svg></div>
<div class="t " style="left:66px;top:529px;letter-spacing:0.012px;">Файлов: 2</div>
<div class="hl" style="left:39px;top:553px;width:9px"></div>
<div class="ic" style="left:48px;top:545px;width:16px;height:16px"><svg viewBox="0 0 16 16" width="100%" height="100%"><g transform="translate(0,1)"><path d="M2.500 1.500h8l3 3v10h-11z" fill="#fff9a8" stroke="#8a8a8a" stroke-width=".9"/><path d="M10.500 1.500v3h3" fill="#fff" stroke="#8a8a8a" stroke-width=".7"/><path d="M5 6.500h5M5 8.500h6M5 10.500h6M5 12.500h6" stroke="#555" stroke-width=".9"/></g></svg></div>
<div class="t " style="left:66px;top:547px;letter-spacing:0.101px;">Сессий: 1</div>
<div class="hl" style="left:39px;top:571px;width:9px"></div>
<div class="ic" style="left:48px;top:563px;width:16px;height:16px"><svg viewBox="0 0 16 16" width="100%" height="100%"><g transform="translate(0,1)"><path d="M2.500 1.500h8l3 3v10h-11z" fill="#fff9a8" stroke="#8a8a8a" stroke-width=".9"/><path d="M10.500 1.500v3h3" fill="#fff" stroke="#8a8a8a" stroke-width=".7"/><path d="M5 6.500h5M5 8.500h6M5 10.500h6M5 12.500h6" stroke="#555" stroke-width=".9"/></g></svg></div>
<div class="t " style="left:66px;top:565px;letter-spacing:0.027px;">Время работы: 38m 1s</div>
<div class="abs" style="left:0;top:648px;width:283px;height:28px;background:#e0ecff;border:1px solid #95b8e7;border-left:0;border-bottom:0"></div>
<div class="ic" style="left:264px;top:657px;width:10px;height:9px"><svg viewBox="0 0 10 9" width="100%" height="100%"><path d="M.5 4.500 5 .7l4.500 3.800M.5 8.500 5 4.700l4.500 3.800" fill="none" stroke="#4aa0e6" stroke-width="1.200"/></svg></div>
<div class="ph" style="left:288px;top:122px;width:1078px"></div>
<div class="t b nv" style="left:293px;top:128px;letter-spacing:-0.171px;">Торренты</div>
<div class="cbo" style="left:1186px;top:128px"></div>
<div class="t b g" style="left:1205px;top:128px;letter-spacing:-0.091px;">Автопоказ атрибутов</div>
<div class="bl" style="left:288px;top:148px;width:1px;height:268px"></div>
<div class="bl" style="left:288px;top:415px;width:1078px;height:1px"></div>
<div class="gh" style="left:289px;top:149px;width:1077px"></div>
<div class="abs" style="left:289px;top:175px;width:25px;height:24px;background:linear-gradient(90deg,#f9f9f9,#efefef)"></div>
<div class="vd" style="left:314px;top:149px;height:50px"></div>
<div class="t" style="left:289px;top:180px;width:25px;text-align:center;">1</div>
<div class="vd" style="left:342px;top:149px;height:50px"></div>
<div class="vd" style="left:643px;top:149px;height:50px"></div>
<div class="t" style="left:347px;top:155px;width:296px;overflow:hidden;letter-spacing:0.263px;">Название</div>
<div class="t" style="left:366px;top:180px;letter-spacing:0.106px;">Hacksaw.Ridge.(2016).BDRip.x264.Rus.AFM.mkv</div>
<div class="vd" style="left:724px;top:149px;height:50px"></div>
<div class="t" style="left:644px;top:155px;width:73px;text-align:right;letter-spacing:0.204px;">Размер</div>
<div class="t" style="left:644px;top:180px;width:76px;text-align:right;">1.50 GB</div>
<div class="vd" style="left:795px;top:149px;height:50px"></div>
<div class="t" style="left:723px;top:155px;width:70px;text-align:center;">%</div>
<div class="vd" style="left:896px;top:149px;height:50px"></div>
<div class="t" style="left:796px;top:155px;width:93px;text-align:right;letter-spacing:-0.054px;">Осталось</div>
<div class="t" style="left:796px;top:180px;width:96px;text-align:right;"><span style="font-size:9px;position:relative;top:-2px;left:-1px">∞</span></div>
<div class="vd" style="left:957px;top:149px;height:50px"></div>
<div class="t" style="left:897px;top:155px;width:53px;text-align:right;letter-spacing:0.059px;">Рейтинг</div>
<div class="t" style="left:897px;top:180px;width:56px;text-align:right;">0</div>
<div class="vd" style="left:1018px;top:149px;height:50px"></div>
<div class="t" style="left:962px;top:155px;width:56px;overflow:hidden;letter-spacing:0.110px;">Состояние</div>
<div class="t" style="left:963px;top:180px;letter-spacing:0.075px;">Загрузка</div>
<div class="vd" style="left:1079px;top:149px;height:50px"></div>
<div class="t" style="left:1023px;top:155px;width:56px;overflow:hidden;letter-spacing:0.251px;">Сиды</div>
<div class="t" style="left:1023px;top:180px;width:56px;overflow:hidden;letter-spacing:0.065px;">0 (4)</div>
<div class="vd" style="left:1140px;top:149px;height:50px"></div>
<div class="t" style="left:1084px;top:155px;width:56px;overflow:hidden;letter-spacing:0.117px;">Личи</div>
<div class="t" style="left:1084px;top:180px;width:56px;overflow:hidden;letter-spacing:0.065px;">0 (0)</div>
<div class="vd" style="left:1221px;top:149px;height:50px"></div>
<div class="t" style="left:1141px;top:155px;width:73px;text-align:right;letter-spacing:0.075px;">Загрузка</div>
<div class="vd" style="left:1302px;top:149px;height:50px"></div>
<div class="t" style="left:1222px;top:155px;width:73px;text-align:right;letter-spacing:-0.072px;">Отдача</div>
<div class="t" style="left:1303px;top:155px;width:73px;text-align:right;letter-spacing:0.114px;">Загружено</div>
<div class="t" style="left:1303px;top:180px;width:76px;text-align:right;letter-spacing:0.107px;">780.57 MB</div>
<div class="hd" style="left:289px;top:199px;width:1076px"></div>
<div class="bl" style="left:288px;top:149px;width:1078px;height:1px"></div>
<div class="cb" style="left:321px;top:154px"><svg viewBox="0 0 11 11" width="100%" height="100%"><path d="M2.200 5.800 4.800 8.800 9.300 2.200" fill="none" stroke="#3c3c3c" stroke-width="2.300"/></svg></div>
<div class="cb" style="left:321px;top:179px"><svg viewBox="0 0 11 11" width="100%" height="100%"><path d="M2.200 5.800 4.800 8.800 9.300 2.200" fill="none" stroke="#3c3c3c" stroke-width="2.300"/></svg></div>
<div class="ic" style="left:349px;top:180px;width:12px;height:14px"><svg viewBox="0 0 12 14" width="100%" height="100%"><defs><linearGradient id="ab" x1="0" y1="0" x2="0" y2="1"><stop offset="0" stop-color="#a4dcff"/><stop offset=".5" stop-color="#3aa4f4"/><stop offset="1" stop-color="#1a86e4"/></linearGradient></defs><ellipse cx="6" cy="13" rx="3.500" ry=".8" fill="#000" opacity=".2"/><path d="M4 .8h4v5.700h3.200L6 12.600.8 6.500H4z" fill="url(#ab)"/></svg></div>
<div class="abs" style="left:729px;top:179px;width:64px;height:15px;border:1px solid #b9b9b9;background:#fff"></div>
<div class="abs" style="left:730px;top:180px;width:31px;height:13px;background:#7ab8fc"></div>
<div class="t " style="left:729px;width:64px;text-align:center;top:179px;letter-spacing:0.217px;">50.51%</div>
<div class="abs" style="left:315px;top:367px;width:1051px;height:17px;background:#f1f1f1"></div>
<div class="abs" style="left:332px;top:369px;width:794px;height:13px;background:#c1c1c1"></div>
<div class="ic" style="left:321px;top:372px;width:4px;height:7px"><svg viewBox="0 0 4 7" width="100%" height="100%"><path d="M4 0v7L0 3.500z" fill="#a3a3a3"/></svg></div>
<div class="ic" style="left:1355px;top:372px;width:4px;height:7px"><svg viewBox="0 0 4 7" width="100%" height="100%"><path d="M0 0v7l4-3.500z" fill="#505050"/></svg></div>
<div class="pg" style="left:289px;top:384px;width:1077px"></div>
<div class="psel" style="left:295px;top:390px"></div>
<div class="t " style="left:302.5px;top:393px;letter-spacing:0.326px;">30</div>
<div class="ic" style="left:324px;top:397px;width:7px;height:6px"><svg viewBox="0 0 7 6" width="100%" height="100%"><path d="M0 0h7L3.500 6z" fill="#000"/></svg></div>
<div class="psep" style="left:344px;top:388px"></div>
<div class="ic" style="left:357px;top:395px;width:8px;height:10px"><svg viewBox="0 0 8 10" width="100%" height="100%"><rect x="0" y="0" width="1.800" height="10" fill="#62ace8"/><path d="M8 0v10L2.500 5z" fill="#62ace8"/></svg></div>
<div class="ic" style="left:385px;top:395px;width:7px;height:10px"><svg viewBox="0 0 7 10" width="100%" height="100%"><path d="M6.500 0v10L.5 5z" fill="#62ace8"/></svg></div>
<div class="psep" style="left:404px;top:388px"></div>
<div class="t " style="left:413.5px;top:393px;letter-spacing:0.202px;">Страница</div>
<div class="pin" style="left:471px;top:390px"></div>
<div class="t " style="left:475px;top:393px;">1</div>
<div class="t " style="left:503px;top:393px;letter-spacing:0.197px;">из 1</div>
<div class="psep" style="left:533px;top:388px"></div>
<div class="ic" style="left:547px;top:395px;width:7px;height:10px"><svg viewBox="0 0 7 10" width="100%" height="100%"><path d="M.5 0v10l6-5z" fill="#62ace8"/></svg></div>
<div class="ic" style="left:574px;top:395px;width:8px;height:10px"><svg viewBox="0 0 8 10" width="100%" height="100%"><rect x="6.200" y="0" width="1.800" height="10" fill="#62ace8"/><path d="M0 0v10l5.500-5z" fill="#62ace8"/></svg></div>
<div class="psep" style="left:593px;top:388px"></div>
<div class="ic" style="left:605px;top:393.5px;width:10px;height:12px"><svg viewBox="0 0 10 12" width="100%" height="100%"><path d="M8.400 4.100A4.200 4.200 0 1 1 4.300 2.400" fill="none" stroke="#1b8fea" stroke-width="1.700"/><path d="M3.800 0 8 2.300 4.200 4.600z" fill="#1b8fea"/></svg></div>
<div class="t " style="right:7px;top:393px;letter-spacing:0.081px;">Просмотр 1 до 1 из 1 записей</div>
<div class="split" style="left:288px;top:416px;width:1078px;height:5px"></div>
<div class="ph" style="left:288px;top:421px;width:1078px"></div>
<div class="t b nv" style="left:293px;top:427px;letter-spacing:-0.058px;">Атрибуты</div>
<div class="ic" style="left:1348px;top:430px;width:10px;height:9px"><svg viewBox="0 0 10 9" width="100%" height="100%"><path d="M.5 .5 5 4.500 9.500 .5M.5 4.500 5 8.500l4.500-4" fill="none" stroke="#4aa0e6" stroke-width="1.200"/></svg></div>
<div class="bl" style="left:357px;top:448px;width:2px;height:228px;background:#9dbde9"></div>
<div class="tab" style="top:452px"></div>
<div class="t nv" style="left:304px;top:458px;letter-spacing:0.109px;">Общие</div>
<div class="tab" style="top:514px"></div>
<div class="t nv" style="left:304px;top:520px;letter-spacing:0.175px;">Файлы</div>
<div class="tab" style="top:545px"></div>
<div class="t nv" style="left:304px;top:551px;letter-spacing:0.343px;">Пиры</div>
<div class="tab" style="top:576px"></div>
<div class="t nv" style="left:304px;top:582px;letter-spacing:0.126px;">Конфиг</div>
<div class="tab" style="top:483px;background:linear-gradient(90deg,#fff,#f6f9ff)"></div>
<div class="t b nv" style="left:304px;top:488px;letter-spacing:-0.085px;">Трекеры</div>
<div class="gh" style="left:359px;top:448px;width:1007px"></div>
<div class="abs" style="left:385px;top:499px;width:967px;height:24px;background:#eaeaea"></div>
<div class="abs" style="left:359px;top:474px;width:25px;height:49px;background:linear-gradient(90deg,#f9f9f9,#efefef)"></div>
<div class="vd" style="left:384px;top:448px;height:75px"></div>
<div class="t" style="left:359px;top:479px;width:25px;text-align:center;">1</div>
<div class="t" style="left:359px;top:504px;width:25px;text-align:center;">2</div>
<div class="vd" style="left:685px;top:448px;height:75px"></div>
<div class="t" style="left:389px;top:454px;width:296px;overflow:hidden;letter-spacing:0.214px;">Анонс</div>
<div class="t" style="left:389px;top:479px;width:296px;overflow:hidden;">http://bt3.t-ru.org/ann</div>
<div class="t" style="left:389px;top:504px;width:296px;overflow:hidden;letter-spacing:0.083px;">http://retracker.local/announce</div>
<div class="vd" style="left:736px;top:448px;height:75px"></div>
<div class="t" style="left:690px;top:454px;width:46px;overflow:hidden;letter-spacing:-0.055px;">Статус</div>
<div class="t" style="left:690px;top:479px;width:46px;overflow:hidden;">1</div>
<div class="t" style="left:690px;top:504px;width:46px;overflow:hidden;">1</div>
<div class="vd" style="left:917px;top:448px;height:75px"></div>
<div class="t" style="left:741px;top:454px;width:176px;overflow:hidden;letter-spacing:-0.011px;">Результат</div>
<div class="t" style="left:741px;top:479px;width:176px;overflow:hidden;letter-spacing:0.093px;">Success</div>
<div class="t" style="left:741px;top:504px;width:176px;overflow:hidden;letter-spacing:0.093px;">Success</div>
<div class="vd" style="left:988px;top:448px;height:75px"></div>
<div class="t" style="left:922px;top:454px;width:66px;overflow:hidden;letter-spacing:0.016px;">Количество</div>
<div class="t" style="left:922px;top:479px;width:66px;overflow:hidden;letter-spacing:0.165px;">-1</div>
<div class="t" style="left:922px;top:504px;width:66px;overflow:hidden;">0</div>
<div class="vd" style="left:1049px;top:448px;height:75px"></div>
<div class="t" style="left:993px;top:454px;width:56px;overflow:hidden;letter-spacing:0.182px;">Успешно</div>
<div class="t" style="left:989px;top:479px;width:60px;text-align:center;letter-spacing:0.100px;">Да</div>
<div class="t" style="left:989px;top:504px;width:60px;text-align:center;letter-spacing:0.100px;">Да</div>
<div class="vd" style="left:1170px;top:448px;height:75px"></div>
<div class="t" style="left:1049px;top:454px;width:120px;text-align:center;letter-spacing:0.108px;">Время анонса</div>
<div class="t" style="left:1050px;top:479px;width:120px;text-align:center;letter-spacing:0.188px;">2017-02-25 11:41:11</div>
<div class="t" style="left:1050px;top:504px;width:120px;text-align:center;letter-spacing:0.188px;">2017-02-25 11:41:11</div>
<div class="vd" style="left:1231px;top:448px;height:75px"></div>
<div class="t" style="left:1170px;top:454px;width:60px;text-align:center;letter-spacing:-0.015px;">Тайм-аут</div>
<div class="t" style="left:1171px;top:479px;width:60px;text-align:center;letter-spacing:0.055px;">Нет</div>
<div class="t" style="left:1171px;top:504px;width:60px;text-align:center;letter-spacing:0.055px;">Нет</div>
<div class="vd" style="left:1352px;top:448px;height:75px"></div>
<div class="t" style="left:1231px;top:454px;width:120px;text-align:center;letter-spacing:0.163px;">Следующий анонс</div>
<div class="t" style="left:1236px;top:479px;letter-spacing:0.188px;">2017-02-25 12:35:05</div>
<div class="t" style="left:1236px;top:504px;letter-spacing:0.188px;">2017-02-25 12:11:11</div>
<div class="bl" style="left:357px;top:448px;width:1009px;height:1px"></div>
<div class="hd" style="left:359px;top:498px;width:994px"></div>
<div class="hd" style="left:359px;top:523px;width:994px"></div>
<div class="pg" style="left:359px;top:644px;width:1007px"></div>
<div class="psel" style="left:365px;top:650px"></div>
<div class="t " style="left:372.5px;top:653px;letter-spacing:0.326px;">30</div>
<div class="ic" style="left:394px;top:657px;width:7px;height:6px"><svg viewBox="0 0 7 6" width="100%" height="100%"><path d="M0 0h7L3.500 6z" fill="#000"/></svg></div>
<div class="psep" style="left:414px;top:648px"></div>
<div class="ic" style="left:427px;top:655px;width:8px;height:10px"><svg viewBox="0 0 8 10" width="100%" height="100%"><rect x="0" y="0" width="1.800" height="10" fill="#62ace8"/><path d="M8 0v10L2.500 5z" fill="#62ace8"/></svg></div>
<div class="ic" style="left:455px;top:655px;width:7px;height:10px"><svg viewBox="0 0 7 10" width="100%" height="100%"><path d="M6.500 0v10L.5 5z" fill="#62ace8"/></svg></div>
<div class="psep" style="left:474px;top:648px"></div>
<div class="t " style="left:483.5px;top:653px;letter-spacing:0.202px;">Страница</div>
<div class="pin" style="left:541px;top:650px"></div>
<div class="t " style="left:545px;top:653px;">1</div>
<div class="t " style="left:573px;top:653px;letter-spacing:0.197px;">из 1</div>
<div class="psep" style="left:603px;top:648px"></div>
<div class="ic" style="left:617px;top:655px;width:7px;height:10px"><svg viewBox="0 0 7 10" width="100%" height="100%"><path d="M.5 0v10l6-5z" fill="#62ace8"/></svg></div>
<div class="ic" style="left:644px;top:655px;width:8px;height:10px"><svg viewBox="0 0 8 10" width="100%" height="100%"><rect x="6.200" y="0" width="1.800" height="10" fill="#62ace8"/><path d="M0 0v10l5.500-5z" fill="#62ace8"/></svg></div>
<div class="psep" style="left:663px;top:648px"></div>
<div class="ic" style="left:675px;top:653.5px;width:10px;height:12px"><svg viewBox="0 0 10 12" width="100%" height="100%"><path d="M8.400 4.100A4.200 4.200 0 1 1 4.300 2.400" fill="none" stroke="#1b8fea" stroke-width="1.700"/><path d="M3.800 0 8 2.300 4.200 4.600z" fill="#1b8fea"/></svg></div>
<div class="t " style="right:7px;top:653px;letter-spacing:0.081px;">Просмотр 1 до 2 из 2 записей</div>
<div class="psep" style="left:695px;top:648px"></div>
<div class="ic" style="left:705px;top:652px;width:16px;height:16px"><svg viewBox="0 0 16 16" width="100%" height="100%"><defs><linearGradient id="dg2" x1="0" y1="0" x2="0" y2="1"><stop offset="0" stop-color="#8e9096"/><stop offset=".45" stop-color="#d6d9e4"/><stop offset="1" stop-color="#a4a6aa"/></linearGradient></defs><ellipse cx="7" cy="15.300" rx="6.500" ry=".7" fill="#000" opacity=".15"/><rect x="1.500" y=".8" width="11" height="4.300" rx=".7" fill="url(#dg2)" stroke="#7c7e84" stroke-width=".7"/><rect x="1.500" y="5.600" width="11" height="4.300" rx=".7" fill="url(#dg2)" stroke="#7c7e84" stroke-width=".7"/><rect x="1.500" y="10.400" width="11" height="4.300" rx=".7" fill="url(#dg2)" stroke="#7c7e84" stroke-width=".7"/><path d="M11 9.700h2.200v2.100h2.100V14h-2.100v2.100H11V14H8.900v-2.200H11z" fill="#3fc43f" stroke="#1f8a1f" stroke-width=".7" stroke-linejoin="round"/></svg></div>
<div class="psep" style="left:727px;top:648px"></div>
<div class="ic" style="left:737px;top:652px;width:16px;height:16px"><svg viewBox="0 0 16 16" width="100%" height="100%"><defs><linearGradient id="dg2" x1="0" y1="0" x2="0" y2="1"><stop offset="0" stop-color="#8e9096"/><stop offset=".45" stop-color="#d6d9e4"/><stop offset="1" stop-color="#a4a6aa"/></linearGradient></defs><ellipse cx="7" cy="15.300" rx="6.500" ry=".7" fill="#000" opacity=".15"/><rect x="1.500" y=".8" width="11" height="4.300" rx=".7" fill="url(#dg2)" stroke="#7c7e84" stroke-width=".7"/><rect x="1.500" y="5.600" width="11" height="4.300" rx=".7" fill="url(#dg2)" stroke="#7c7e84" stroke-width=".7"/><rect x="1.500" y="10.400" width="11" height="4.300" rx=".7" fill="url(#dg2)" stroke="#7c7e84" stroke-width=".7"/><path d="M7.300 15.600l.8-2.500 5.700-5.700 1.700 1.700-5.700 5.700z" fill="#f4d23a" stroke="#a88410" stroke-width=".5"/><path d="M13.200 8l.9-.9a.9.900 0 0 1 1.300 0l.5.500a.9.900 0 0 1 0 1.300l-.9.900z" fill="#ee4a4a"/><path d="M7.300 15.600l.4-1.300.9.900z" fill="#111"/></svg></div>
<div class="psep" style="left:759px;top:648px"></div>
<div class="ic" style="left:769px;top:652px;width:16px;height:16px"><svg viewBox="0 0 16 16" width="100%" height="100%"><defs><linearGradient id="dg2" x1="0" y1="0" x2="0" y2="1"><stop offset="0" stop-color="#8e9096"/><stop offset=".45" stop-color="#d6d9e4"/><stop offset="1" stop-color="#a4a6aa"/></linearGradient></defs><ellipse cx="7" cy="15.300" rx="6.500" ry=".7" fill="#000" opacity=".15"/><rect x="1.500" y=".8" width="11" height="4.300" rx=".7" fill="url(#dg2)" stroke="#7c7e84" stroke-width=".7"/><rect x="1.500" y="5.600" width="11" height="4.300" rx=".7" fill="url(#dg2)" stroke="#7c7e84" stroke-width=".7"/><rect x="1.500" y="10.400" width="11" height="4.300" rx=".7" fill="url(#dg2)" stroke="#7c7e84" stroke-width=".7"/><rect x="8.700" y="11.300" width="7" height="3" rx="1.200" fill="#e8343a" stroke="#b81c22" stroke-width=".6"/><rect x="9.800" y="12.300" width="4.800" height=".8" fill="#f8a0a0"/></svg></div>
<div class="abs" style="left:288px;top:479px;width:72px;height:34px;border:2px solid #f60d0d;box-shadow:1.5px 1.5px 3px rgba(0,0,0,.5),inset 1.5px 1.5px 3px rgba(0,0,0,.5)"></div>
<div class="bl" style="left:0;top:675px;width:1366px;height:2px"></div>
<div class="bl" style="left:0;top:677px;width:1px;height:23px"></div>
<div class="ic" style="left:5px;top:681px;width:12px;height:14px"><svg viewBox="0 0 12 14" width="100%" height="100%"><defs><linearGradient id="ab" x1="0" y1="0" x2="0" y2="1"><stop offset="0" stop-color="#a4dcff"/><stop offset=".5" stop-color="#3aa4f4"/><stop offset="1" stop-color="#1a86e4"/></linearGradient></defs><ellipse cx="6" cy="13" rx="3.500" ry=".8" fill="#000" opacity=".2"/><path d="M4 .8h4v5.700h3.200L6 12.600.8 6.500H4z" fill="url(#ab)"/></svg></div>
<div class="t " style="left:22px;top:679px;letter-spacing:0.005px;">Скорость загрузки: 0.69 KB/s |</div>
<div class="ic" style="left:195px;top:681px;width:10px;height:13px"><svg viewBox="0 0 12 14" width="100%" height="100%"><defs><linearGradient id="ag" x1="0" y1="0" x2="0" y2="1"><stop offset="0" stop-color="#5ac82a"/><stop offset="1" stop-color="#2a8a0a"/></linearGradient></defs><ellipse cx="6" cy="13.200" rx="3" ry=".7" fill="#000" opacity=".2"/><path d="M6 .8 11.300 7H8v5.600H4V7H.7z" fill="url(#ag)" stroke="#2a8a10" stroke-width=".4"/></svg></div>
<div class="t " style="left:211px;top:679px;letter-spacing:-0.019px;">Скорость отдачи: 0.00 KB/s | Свободно места: 5.33 GB</div>
<div class="t " style="right:3px;top:679px;letter-spacing:0.076px;">Transmission Версия:2.84 (14307), RPC: 15, WEB Control: 1.0 Beta(20141010)</div>
<div class="bl" style="left:1365px;top:38px;width:1px;height:84px"></div>
<div class="bl" style="left:1365px;top:148px;width:1px;height:268px"></div>
<div class="bl" style="left:1365px;top:447px;width:1px;height:230px"></div>
<div id="bottomdark" class="abs"></div>
<div class="abs" style="left:245px;top:700px;width:48px;height:2px;background:#454545"></div>
</body>
</html>
